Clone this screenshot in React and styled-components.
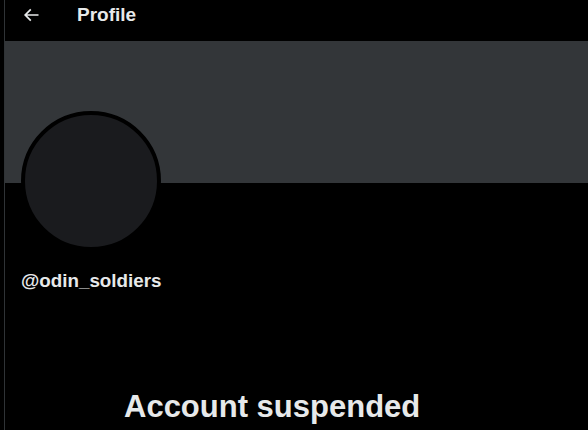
import styled, { createGlobalStyle } from "styled-components";

const Global = createGlobalStyle`
  html, body {
    margin: 0;
    background: #000;
    overflow: hidden;
  }
  body {
    font-family: "Liberation Sans", Arial, sans-serif;
    color: #e7e9ea;
  }
`;

const BackArrow = () => (
  <svg width="20" height="20" viewBox="0 0 24 24" fill="#e7e9ea">
    <path d="M7.414 13l5.043 5.04-1.414 1.42L3.586 12l7.457-7.46 1.414 1.42L7.414 11H21v2H7.414z" />
  </svg>
);

const App = () => {
  return (
    <Page>
      <Global />
      <Column>
        <Header>
          <BackButton>
            <BackArrow />
          </BackButton>
          <Title>Profile</Title>
        </Header>
        <Banner />
        <ProfileInfo>
          <Avatar />
          <Handle>@odin_soldiers</Handle>
        </ProfileInfo>
        <EmptyState>
          <EmptyTitle>Account suspended</EmptyTitle>
        </EmptyState>
      </Column>
    </Page>
  );
};

const Page = styled.div`
  display: flex;
  padding-left: 4px;
  min-height: 430px;
`;

const Column = styled.main`
  width: 600px;
  flex-shrink: 0;
  min-height: 430px;
  border-left: 1px solid #2f3336;
  border-right: 1px solid #2f3336;
`;

const Header = styled.div`
  height: 41px;
  display: flex;
  align-items: center;
  padding-left: 16px;
  background: #000;
`;

const BackButton = styled.div`
  width: 20px;
  height: 20px;
  margin-top: -12px;
  margin-right: 36px;
  display: flex;
  align-items: center;
  justify-content: center;
  cursor: pointer;
`;

const Title = styled.h2`
  margin: 0;
  margin-top: -12px;
  font-size: 19px;
  font-weight: 700;
  line-height: 24px;
`;

const Banner = styled.div`
  height: 142px;
  background: #333639;
`;

const ProfileInfo = styled.div`
  padding: 0 16px;
`;

const Avatar = styled.div`
  width: 132px;
  height: 132px;
  margin-top: -72px;
  border: 4px solid #000;
  border-radius: 50%;
  background: #1a1b1e;
`;

const Handle = styled.div`
  margin-top: 18px;
  font-size: 18.8px;
  font-weight: 700;
  line-height: 24px;
`;

const EmptyState = styled.div`
  max-width: 362px;
  margin: 96px auto 0;
`;

const EmptyTitle = styled.h1`
  margin: 0;
  font-size: 31px;
  font-weight: 700;
  line-height: 36px;
`;

export default App;
